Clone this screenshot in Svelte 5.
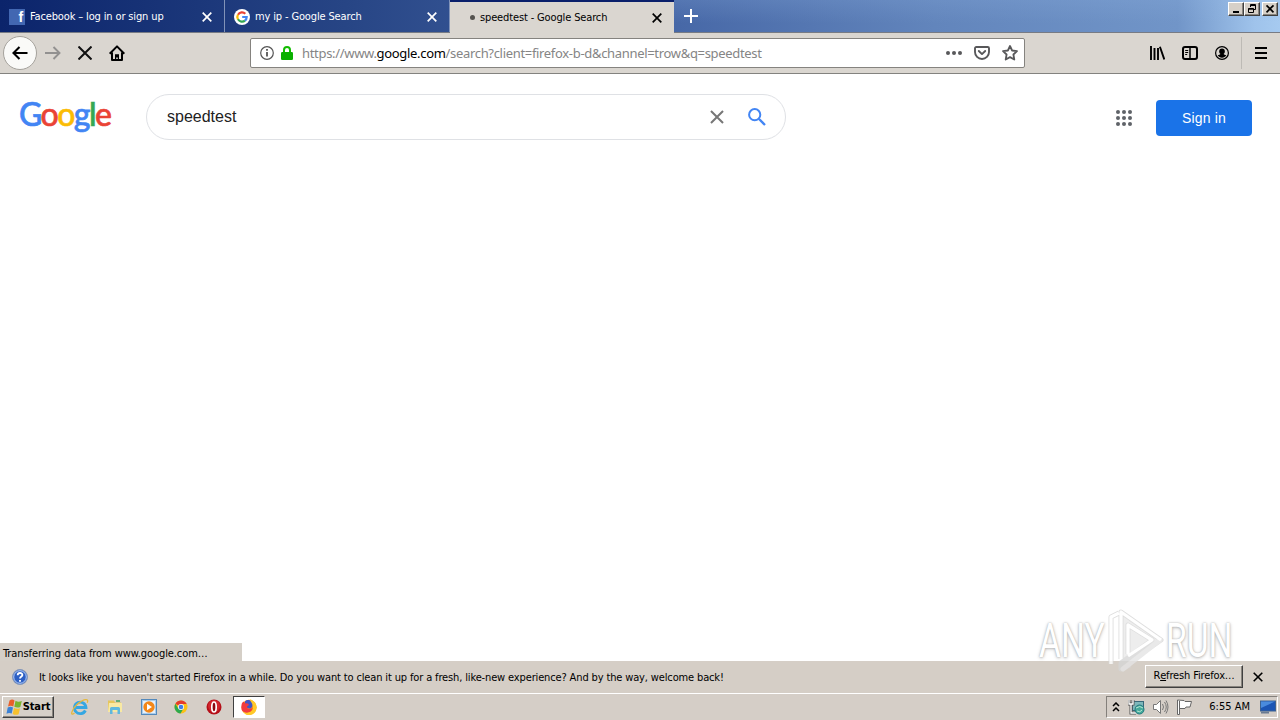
<script lang="ts">
	type Tab = { title: string; icon: 'facebook' | 'google' | 'loading'; active?: boolean };

	const tabs: Tab[] = [
		{ title: 'Facebook – log in or sign up', icon: 'facebook' },
		{ title: 'my ip - Google Search', icon: 'google' },
		{ title: 'speedtest - Google Search', icon: 'loading', active: true }
	];

	const logo = [
		['G', '#4285f4'],
		['o', '#ea4335'],
		['o', '#fbbc05'],
		['g', '#4285f4'],
		['l', '#34a853'],
		['e', '#ea4335']
	];

	const dots = [0, 1, 2, 3, 4, 5, 6, 7, 8];

	let query = $state('speedtest');
</script>

{#snippet cross(size: number, width: number)}
	<svg width={size} height={size} viewBox="0 0 10 10" fill="none" stroke="currentColor" stroke-width={width}>
		<path d="M.7.7l8.6 8.6M9.3.7L.7 9.3" />
	</svg>
{/snippet}

<div class="screen">
	<header class="titlebar">
		{#each tabs as tab}
			<div class="tab" class:active={tab.active}>
				{#if tab.icon === 'facebook'}
					<span class="facebook">f</span>
				{:else if tab.icon === 'google'}
					<svg width="16" height="16" viewBox="0 0 16 16" fill="none" stroke-width="2.2">
						<circle cx="8" cy="8" r="8" fill="#fff" />
						<path d="M4 5.7A4.7 4.7 0 0 1 11.3 4.7" stroke="#ea4335" />
						<path d="M4 5.6A4.7 4.7 0 0 0 4 10.4" stroke="#fbbc05" />
						<path d="M4 10.3A4.7 4.7 0 0 0 11 11.6" stroke="#34a853" />
						<path d="M8.2 8H12.7A4.7 4.7 0 0 1 10.9 11.7" stroke="#4285f4" />
					</svg>
				{:else}
					<span class="loading"></span>
				{/if}
				<span class="tab-title">{tab.title}</span>
				<span class="tab-close">{@render cross(10, 1.7)}</span>
			</div>
		{/each}
		<button class="new-tab" aria-label="New tab">
			<svg width="14" height="14" viewBox="0 0 14 14" stroke="#fff" stroke-width="2"><path d="M7 0v14M0 7h14" /></svg>
		</button>
		<div class="window-buttons">
			<button aria-label="Minimize"><svg width="12" height="10" viewBox="0 0 12 10"><path d="M3 7h6v2H3z" /></svg></button>
			<button aria-label="Restore">
				<svg width="12" height="10" viewBox="0 0 12 10" fill="none" stroke="#000">
					<path d="M4.5 3V.5h5v5H8M4 1.5h6M2.5 4.5h5v4h-5zM2 5.2h6" />
				</svg>
			</button>
			<button class="close" aria-label="Close">
				<svg width="12" height="10" viewBox="0 0 12 10" stroke="#000" stroke-width="1.7"><path d="M2.5 1.3l7 7M9.5 1.3l-7 7" /></svg>
			</button>
		</div>
	</header>

	<nav class="toolbar">
		<button class="back" aria-label="Back">
			<svg width="16" height="14" viewBox="0 0 16 14" fill="none" stroke="#000" stroke-width="2.1"><path d="M15.5 7H1.5M7.5 1l-6 6 6 6" /></svg>
		</button>
		<button class="tool" aria-label="Forward">
			<svg width="16" height="14" viewBox="0 0 16 14" fill="none" stroke="#929190" stroke-width="1.9"><path d="M0 7h14.3M8.5 1l6 6-6 6" /></svg>
		</button>
		<button class="tool" aria-label="Stop">
			<svg width="14" height="14" viewBox="0 0 14 14" stroke="#111" stroke-width="2"><path d="M.5.5l13 13M13.5.5L.5 13.5" /></svg>
		</button>
		<button class="tool" aria-label="Home">
			<svg width="16" height="16" viewBox="0 0 16 16" fill="none" stroke="#000" stroke-width="2">
				<path d="M.7 8.7L8 1.4l7.3 7.3M3 7.5V15h10V7.5" stroke-linejoin="round" />
				<path d="M6 15V9.2h4V15H8.8v-2.5H7.2V15z" fill="#000" stroke="none" />
			</svg>
		</button>

		<div class="urlbar">
			<svg class="info" width="14" height="14" viewBox="0 0 14 14" fill="none" stroke="#555">
				<circle cx="7" cy="7" r="6.3" stroke-width="1.2" />
				<path d="M7 6v4.5M7 3v1.8" stroke-width="1.8" />
			</svg>
			<svg class="lock" width="12" height="14" viewBox="0 0 12 14">
				<path d="M3 7V4a3 3 0 0 1 6 0v3" fill="none" stroke="#12bc00" stroke-width="2" />
				<rect y="6" width="12" height="8" rx="1.3" fill="#0ab000" />
			</svg>
			<span class="url">https://www.<b>google.com</b>/search?client=firefox-b-d&channel=trow&q=speedtest</span>
			<div class="page-actions">
				<svg width="16" height="6" viewBox="0 0 16 6" fill="#58585a"><circle cx="2" cy="3" r="2" /><circle cx="8" cy="3" r="2" /><circle cx="14" cy="3" r="2" /></svg>
				<svg width="16" height="14" viewBox="0 0 16 14" fill="none" stroke="#58585a" stroke-width="1.9" stroke-linecap="round" stroke-linejoin="round">
					<path d="M2.3 1h11.4a1.3 1.3 0 0 1 1.3 1.3V6A7 7 0 0 1 1 6V2.3A1.3 1.3 0 0 1 2.3 1zM4.8 5L8 8.1 11.2 5" />
				</svg>
				<svg width="16" height="16" viewBox="0 0 16 16" fill="none" stroke="#58585a" stroke-width="1.8" stroke-linejoin="round">
					<path d="M8 1l2.1 4.5 4.9.6-3.6 3.4.9 5L8 12.1l-4.3 2.4.9-5L1 6.1l4.9-.6z" />
				</svg>
			</div>
		</div>

		<div class="right-tools">
			<svg width="16" height="14" viewBox="0 0 16 14" stroke="#000" stroke-width="1.9" fill="none"><path d="M2 0v14M5.5 2v12M9 2v12M10.9.8L15.3 13.5" /></svg>
			<svg width="16" height="14" viewBox="0 0 16 14" fill="none" stroke="#000">
				<rect x="1" y="1" width="14" height="12" rx="2" stroke-width="2" />
				<path d="M8 1v12" stroke-width="1.5" /><path d="M3.2 4.5h3M3.2 6.5h3M3.2 8.5h2" />
			</svg>
			<svg width="14" height="14" viewBox="0 0 14 14">
				<circle cx="7" cy="7" r="6.4" fill="none" stroke="#000" stroke-width="1.2" />
				<circle cx="7" cy="5.4" r="2.8" /><path d="M2.7 9.2c1.400-.2 2-.7 2.700-1.300h3.200c.7.6 1.300 1.100 2.700 1.300a5 5 0 0 1-8.600 0z" />
			</svg>
		</div>
		<button class="menu" aria-label="Menu">
			<svg width="12" height="12" viewBox="0 0 12 12" stroke="#000" stroke-width="2"><path d="M0 1h12M0 6h12M0 11h12" /></svg>
		</button>
	</nav>

	<main class="page">
		<div class="logo" aria-label="Google">
			{#each logo as [letter, color]}<span style="color: {color}">{letter}</span>{/each}
		</div>
		<form class="search">
			<input bind:value={query} aria-label="Search" />
			<span class="clear">{@render cross(14, 1.45)}</span>
			<svg width="18" height="18" viewBox="0 0 18 18" fill="none" stroke="#4285f4" stroke-width="2">
				<circle cx="6.7" cy="6.7" r="5.6" /><path d="M10.8 10.8l6.2 6.2" stroke-width="2.3" />
			</svg>
		</form>
		<div class="apps">
			{#each dots as dot (dot)}<i></i>{/each}
		</div>
		<button class="sign-in">Sign in</button>
		<div class="status">Transferring data from www.google.com…</div>
	</main>

	<section class="notification">
		<svg width="16" height="16" viewBox="0 0 16 16">
			<circle cx="8" cy="8" r="7.5" fill="#2c5fc4" stroke="#8799b8" />
			<circle cx="8" cy="8" r="6.3" fill="none" stroke="#c9dcfa" stroke-width=".9" />
			<path d="M5.7 6.2c0-3 4.7-2.8 4.7-.3C10.4 7.5 8 7.5 8 9.6M8 11v1.8" fill="none" stroke="#fff" stroke-width="1.8" />
		</svg>
		<span class="message">It looks like you haven't started Firefox in a while. Do you want to clean it up for a fresh, like-new experience? And by the way, welcome back!</span>
		<button class="refresh">R<u>e</u>fresh Firefox…</button>
		<span class="dismiss">{@render cross(10, 1.6)}</span>
	</section>

	<footer class="taskbar">
		<button class="start">
			<svg width="17" height="16" viewBox="0 0 16 16">
				<path d="M3 1.500c2-1.300 3.600-1 5-.1L6.800 7.400C5 6.500 3.300 6.500 1.500 7.500z" fill="#e9602a" />
				<path d="M9 1.800c2 1.100 4 1.200 6.300.1L13.800 8c-2 .9-4 .8-6-.2z" fill="#79b52e" />
				<path d="M1.200 8.600c1.800-1 3.500-1 5.300-.1L5.200 14.500C3.400 13.600 1.800 13.700 0 14.700z" fill="#3c82d5" />
				<path d="M7.500 9c2 1 4 1.100 6 .2l-1.400 6c-2 1-4 .8-5.900-.3z" fill="#f6c12e" />
			</svg>
			<b>Start</b>
		</button>
		<div class="launchers">
			<svg width="18" height="18" viewBox="0 0 18 18" fill="none">
				<path d="M14.400 12.500A5.800 5.800 0 1 1 15 9.500H5" stroke="#35a7e2" stroke-width="2.800" />
				<path d="M3.500 15C-1 19 0 12 6 6.500 12 1.200 18.500-.5 16.200 4.800" stroke="#e5b83c" stroke-width="1.300" />
			</svg>
			<svg width="16" height="16" viewBox="0 0 16 16">
				<path d="M1 1.500h6l1 2h6V13H1z" fill="#e6c65c" /><path d="M2 4h13v9H1z" fill="#f8e9a3" />
				<path d="M3 15V9.500Q3 8 4.500 8h7Q13 8 13 9.500V15h-2.500v-4h-5v4z" fill="#5eb8de" />
				<path d="M9 2h4" stroke="#3da058" stroke-width="1.500" />
			</svg>
			<svg width="16" height="16" viewBox="0 0 16 16">
				<rect x=".5" y=".5" width="15" height="15" fill="#a9cceb" stroke="#5489bb" />
				<rect x="2" y="2" width="12" height="12" fill="#e6f1fb" />
				<circle cx="8" cy="8" r="5.700" fill="#f38718" /><path d="M6 4.700l5 3.300-5 3.300z" fill="#fff" />
			</svg>
			<svg width="14" height="14" viewBox="0 0 14 14">
				<circle cx="7" cy="7" r="6.500" fill="#fbc116" />
				<path d="M7 7L1.400 3.700A6.500 6.500 0 0 1 12.700 4H7z" fill="#e33b2e" />
				<path d="M7 7L4.200 8.500 1.400 3.700A6.500 6.500 0 0 0 6.500 13.500L9.500 8.500z" fill="#2da94f" />
				<circle cx="7" cy="7" r="3" fill="#fff" /><circle cx="7" cy="7" r="2.300" fill="#3f7ee8" />
			</svg>
			<svg width="16" height="16" viewBox="0 0 16 16">
				<circle cx="8" cy="8" r="7.500" fill="#b50f18" /><circle cx="8" cy="7" r="6" fill="#d2262d" />
				<ellipse cx="8" cy="8" rx="2.200" ry="5" fill="#8b0910" stroke="#fff" stroke-width="1.700" />
			</svg>
		</div>
		<div class="running">
			<svg width="16" height="16" viewBox="0 0 16 16">
				<circle cx="8" cy="8.200" r="7.500" fill="#ff8a16" />
				<path d="M9 .3c4 1.500 7 4 6.600 8.700A7.500 7.500 0 0 1 1 11C6 15 12 13 12 8.500 12 6 9 5 9 .3z" fill="#ffc928" />
				<path d="M4 2.500C6 .5 9 .5 10 3c2 2 2 5-.5 6.500C6 9.500 5 8 4 6z" fill="#3e55c8" />
				<path d="M1 4l1.500-1.500L4 4.200l3 .3 1 1.500-2 1.500c.5 3 3 3 5.500 1.500-.5 5-8 6.500-10.800 2C.3 9 .2 6 1 4z" fill="#f13a3e" />
			</svg>
		</div>
		<div class="tray">
			<svg width="8" height="10" viewBox="0 0 8 10" fill="none" stroke="#000" stroke-width="1.500"><path d="M1 4l3-3 3 3M1 9l3-3 3 3" /></svg>
			<svg class="network" width="17" height="16" viewBox="0 0 17 16">
				<rect x="4.500" y="2.500" width="11" height="9" fill="#7db7ba" stroke="#386779" />
				<path d="M1 1v4h4V1M3 5v9h5" fill="none" stroke="#555" stroke-width="3" /><path d="M1 1v4h4V1M3 5v9h5" fill="none" stroke="#fff" stroke-width="1.300" />
				<circle cx="11.500" cy="10.500" r="4.500" fill="#45a99a" stroke="#237a80" /><path d="M8 9q4-3 7 0M9 12q3 2 5-1" stroke="#b9e7d4" fill="none" />
			</svg>
			<svg class="volume" width="17" height="16" viewBox="0 0 17 16" fill="none" stroke="#777">
				<path d="M1.500 5.500h3l4-4v13l-4-4h-3z" fill="#fff" /><path d="M10.500 5q2 3 0 6M12.500 3q3.500 5 0 10M14 1.500q4 6.500 0 13" />
			</svg>
			<svg class="flag" width="17" height="16" viewBox="0 0 17 16" fill="#fff" stroke="#666">
				<path d="M1.500 1v14.500h2V9.500h5.500l1-1.500h4l1.500-5.500H9L8 1.500z" /><path d="M3.500 2v8" />
			</svg>
			<time>6:55 AM</time>
			<svg width="16" height="14" viewBox="0 0 16 14">
				<rect x=".5" y="1" width="15" height="10" fill="#1c55b4" stroke="#3e6290" /><path d="M1 1.500h14L1 8z" fill="#4a8bdd" />
				<path d="M1 12.500h8" stroke="#6a7b91" stroke-width="2" />
			</svg>
		</div>
	</footer>

	<div class="watermark">
		<span>ANY</span>
		<svg width="60" height="64" viewBox="0 0 60 64" fill="none" stroke-linejoin="round">
			<path d="M15 3l40 28-38 30V50l-2 0z" fill="#e9e9e9" />
			<path d="M5 55V8l8-4M15 50V3l40 28-38 26M22 45V16l24 15-31 23v6l9-4" stroke="#d6d6d6" stroke-width="5" />
			<path d="M17 60l37-29" stroke="#e4e4e4" stroke-width="5" stroke-linecap="round" />
			<path d="M5 55V8l8-4M15 50V3l40 28M22 45V16l24 15-24 16" stroke="#fff" stroke-width="3.300" />
		</svg>
		<span>RUN</span>
	</div>
</div>

<style>
	:global(body) {
		margin: 0;
		overflow: hidden;
	}

	.screen {
		position: relative;
		display: flex;
		flex-direction: column;
		width: 1280px;
		height: 720px;
		overflow: hidden;
		background: #fff;
		color: #000;
		font: 11px/14px 'DejaVu Sans Condensed', 'DejaVu Sans', sans-serif;
		font-stretch: condensed;
		letter-spacing: -0.14px;
	}

	.screen * {
		box-sizing: border-box;
	}

	svg {
		display: block;
		flex: none;
	}

	button {
		display: flex;
		align-items: center;
		justify-content: center;
		padding: 0;
		border: 0;
		background: none;
		color: inherit;
		font: inherit;
		letter-spacing: inherit;
	}

	.titlebar {
		display: flex;
		flex: none;
		height: 33px;
		border-bottom: 1px solid #777b84;
		background:
			linear-gradient(180deg, rgba(150, 185, 230, 0.18), transparent 70%) 674px 0 / 606px 33px no-repeat,
			linear-gradient(90deg, #0b246b 0, #274585 27%, #4768a7 53%, #6285bc 73%, #7195c8 92%, #9fc3eb 98%, #a6caf0 100%);
	}

	.tab {
		display: flex;
		align-items: center;
		width: 225px;
		padding: 2px 12px 0 9px;
		border-right: 1px solid #8193b8;
		color: #fff;
	}

	.tab.active {
		width: 224px;
		height: 33px;
		border-top: 2px solid #0a1f6b;
		border-right: 0;
		padding-top: 0;
		background: #dad6d0;
		color: #000;
	}

	.tab-title {
		flex: 1;
		margin-left: 5px;
		white-space: nowrap;
		letter-spacing: -0.14px;
	}

	.facebook {
		width: 16px;
		height: 16px;
		padding-right: 2px;
		background: #4267b2;
		text-align: right;
		font: bold 14px/16px 'Liberation Sans', sans-serif;
	}

	.loading {
		width: 5px;
		height: 5px;
		margin-left: 11px;
		border-radius: 50%;
		background: #55534f;
	}

	.new-tab {
		width: 34px;
		height: 32px;
	}

	.window-buttons {
		display: flex;
		margin: 2px 2px 0 auto;
	}

	.window-buttons button,
	.refresh,
	.start {
		border: 1px solid;
		border-color: #fff #404040 #404040 #fff;
		box-shadow: inset -1px -1px #88847e;
		background: #d6d0c8;
	}

	.window-buttons button {
		width: 16px;
		height: 14px;
	}

	.window-buttons .close {
		margin-left: 2px;
	}

	.toolbar {
		display: flex;
		align-items: center;
		flex: none;
		height: 41px;
		padding-left: 3px;
		border-bottom: 1px solid #83827f;
		background: #dad6d0;
	}

	.back {
		width: 34px;
		height: 34px;
		border: 1px solid #a5a29c;
		border-radius: 50%;
		background: #fafaf8;
	}

	.tool {
		width: 32px;
		height: 32px;
	}

	.urlbar {
		display: flex;
		align-items: center;
		width: 775px;
		height: 30px;
		margin-left: 117px;
		padding: 0 6px 0 9px;
		border: 1px solid #85837f;
		border-radius: 2px;
		background: #fff;
	}

	.lock {
		margin-left: 7px;
	}

	.url {
		margin-left: 9px;
		color: #858585;
		font: 13px/18px 'Noto Sans', sans-serif;
		letter-spacing: -0.32px;
		white-space: nowrap;
	}

	.url b {
		color: #000;
		font-weight: 400;
	}

	.page-actions {
		display: flex;
		align-items: center;
		gap: 12px;
		margin-left: auto;
	}

	.right-tools {
		display: flex;
		align-items: center;
		gap: 17px;
		margin-left: auto;
		padding-right: 12px;
	}

	.menu {
		width: 39px;
		height: 32px;
		border-left: 1px solid #bdbab5;
	}

	.page {
		position: relative;
		display: flex;
		align-items: flex-start;
		flex: 1;
		padding: 20px 28px 0 19px;
		font-family: 'Liberation Sans', Arial, sans-serif;
		letter-spacing: 0;
	}

	.logo {
		width: 127px;
		font: 500 32px/40px Lato, sans-serif;
		letter-spacing: -1.55px;
		-webkit-text-stroke: 0.6px;
	}

	.search {
		display: flex;
		align-items: center;
		width: 640px;
		height: 46px;
		padding: 0 19px 0 20px;
		border: 1px solid #dfe1e5;
		border-radius: 23px;
	}

	.search input {
		flex: 1;
		padding: 0;
		border: 0;
		outline: 0;
		color: #222;
		font: 16px/20px 'Liberation Sans', Arial, sans-serif;
	}

	.clear {
		margin-right: 24px;
		color: #777;
	}

	.apps {
		display: grid;
		grid-template-columns: repeat(3, 4px);
		gap: 2px;
		margin: 16px 24px 0 auto;
	}

	.apps i {
		width: 4px;
		height: 4px;
		border-radius: 50%;
		background: #5f6368;
	}

	.sign-in {
		width: 96px;
		height: 36px;
		margin-top: 6px;
		border-radius: 4px;
		background: #1a73e8;
		color: #fff;
		font: 14px/18px 'Liberation Sans', Arial, sans-serif;
		letter-spacing: 0.2px;
	}

	.status {
		position: absolute;
		left: 0;
		bottom: 0;
		width: 242px;
		height: 18px;
		padding: 4px 3px 0;
		background: #d5cfc7;
		font: 11px/14px 'DejaVu Sans Condensed', 'DejaVu Sans', sans-serif;
		font-stretch: condensed;
		letter-spacing: -0.08px;
		white-space: nowrap;
	}

	.notification {
		display: flex;
		align-items: center;
		flex: none;
		height: 32px;
		padding: 0 17px 0 12px;
		background: #d5cec6;
	}

	.message {
		margin-left: 11px;
		padding-top: 1px;
		white-space: nowrap;
	}

	.refresh {
		width: 98px;
		height: 23px;
		margin: 0 10px 2px auto;
		white-space: nowrap;
	}

	.taskbar {
		display: flex;
		align-items: center;
		flex: none;
		height: 27px;
		padding: 0 2px;
		border-top: 1px solid #fff;
		background: #d5cec7;
	}

	.start {
		width: 52px;
		height: 22px;
	}

	.start b {
		font-size: 11px;
		letter-spacing: -0.1px;
	}

	.launchers {
		display: flex;
		align-items: center;
		justify-content: space-between;
		width: 151px;
		margin-left: 17px;
	}

	.running {
		display: flex;
		align-items: center;
		justify-content: center;
		width: 32px;
		height: 22px;
		margin-left: 11px;
		border: 1px solid;
		border-color: #404040 #fff #fff #404040;
		background: #fff;
	}

	.tray {
		display: flex;
		align-items: center;
		width: 172px;
		height: 22px;
		margin-left: auto;
		padding: 0 1px 0 5px;
		border: 1px solid;
		border-color: #84807b #fff #fff #84807b;
	}

	.network {
		margin-left: 8px;
	}

	.volume,
	.flag {
		margin-left: 7px;
	}

	.tray time {
		margin-left: auto;
		margin-right: 10px;
		white-space: nowrap;
		letter-spacing: 0;
	}

	.watermark {
		position: absolute;
		left: 1039px;
		top: 609px;
		display: flex;
		align-items: center;
		width: 200px;
		height: 64px;
		opacity: 0.8;
		color: #fff;
		font: 48px/64px Roboto, sans-serif;
		letter-spacing: 0;
		text-shadow: 0 0 2px #999, 0 1px 4px #aaa;
	}

	.watermark span {
		width: 67px;
		flex: none;
		transform: scaleX(0.7);
		transform-origin: left;
	}
</style>
